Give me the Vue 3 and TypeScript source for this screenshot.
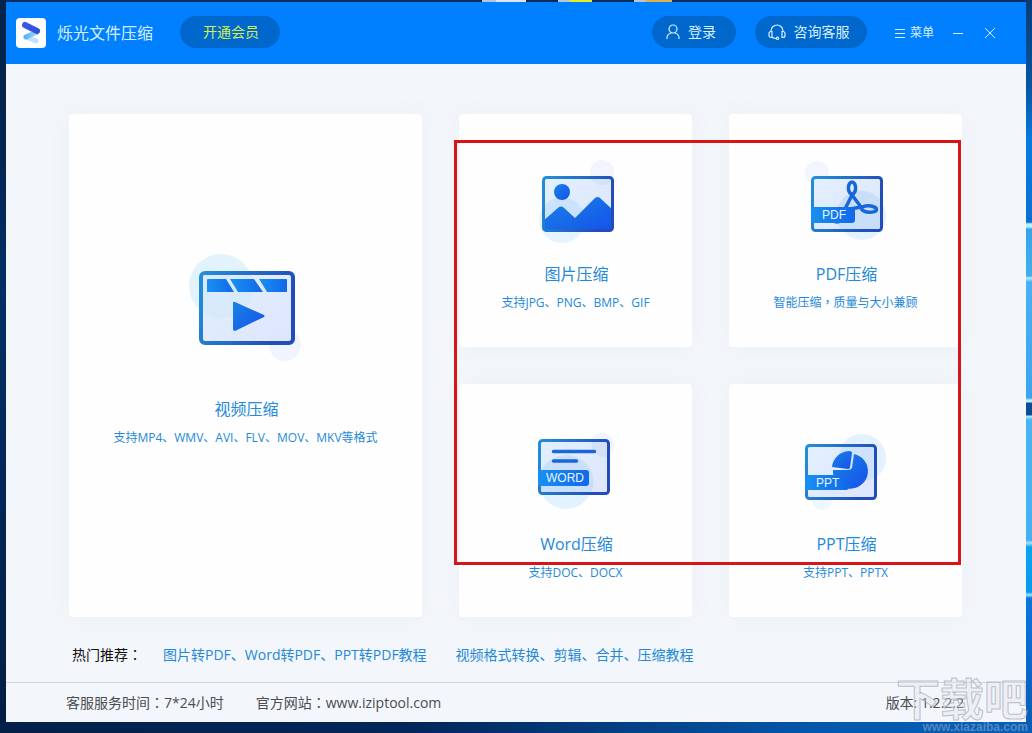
<script setup lang="ts">
interface Feature {
  id: 'image' | 'pdf' | 'word' | 'ppt'
  title: string
  parts: string[]
}

const features: Feature[] = [
  { id: 'image', title: '图片压缩', parts: ['支持JPG、PNG、BMP、GIF'] },
  { id: 'pdf', title: 'PDF压缩', parts: ['智能压缩', '质量与大小兼顾'] },
  { id: 'word', title: 'Word压缩', parts: ['支持DOC、DOCX'] },
  { id: 'ppt', title: 'PPT压缩', parts: ['支持PPT、PPTX'] },
]
</script>

<template>
  <div class="desktop">
    <div class="peek" aria-hidden="true"><i></i><i></i><i></i></div>
    <div class="window">
      <header class="titlebar">
        <svg class="logo" width="30" height="30" viewBox="0 0 30 30" aria-hidden="true">
          <defs>
            <linearGradient id="lg1" x1="0" y1="0" x2="1" y2="0"><stop offset="0" stop-color="#3a58ea" /><stop offset="1" stop-color="#2f50dc" /></linearGradient>
            <linearGradient id="lg2" x1="0" y1="0" x2="1" y2="0"><stop offset="0" stop-color="#58b4f6" /><stop offset="1" stop-color="#a8dcfb" /></linearGradient>
          </defs>
          <rect width="30" height="30" rx="4" fill="#fff" />
          <path d="M10 19L20 23" stroke="#bfe3fb" stroke-width="5" stroke-linecap="round" />
          <path d="M10 19L21 14" stroke="url(#lg2)" stroke-width="5" stroke-linecap="round" />
          <path d="M9 7L21 13" stroke="url(#lg1)" stroke-width="6" stroke-linecap="round" />
        </svg>
        <h1 class="name">烁光文件压缩</h1>
        <button class="pill vip" type="button">开通会员</button>
        <div class="actions">
          <button class="pill login" type="button">
            <svg width="16" height="16" viewBox="0 0 16 16" fill="none" stroke="currentColor" stroke-width="1.2" aria-hidden="true">
              <circle cx="8" cy="5" r="4" /><path d="M2 15v-1c0-2.500 2-4.500 4.300-5M14 15v-1c0-2.500-2-4.500-4.300-5" />
            </svg>
            登录
          </button>
          <button class="pill service" type="button">
            <svg width="18" height="16" viewBox="0 0 18 16" fill="none" stroke="currentColor" stroke-width="1.200" aria-hidden="true">
              <path d="M3 8V7a6 6 0 0 1 12 0v1" /><path d="M4 7.500v6H3A2 2 0 0 1 1 11.500v-2A2 2 0 0 1 3 7.500zM14 7.500v6h1a2 2 0 0 0 2-2v-2a2 2 0 0 0-2-2zM4 13c1 1 2 1.500 4 1.500" />
              <circle cx="9.500" cy="14.300" r="1.200" />
            </svg>
            咨询客服
          </button>
          <button class="plain menu" type="button">
            <svg width="10" height="10" viewBox="0 0 10 10" stroke="currentColor" aria-hidden="true"><path d="M0 1.500h10M0 5.500h10M0 9.500h10" /></svg>
            菜单
          </button>
          <button class="plain min" type="button" aria-label="最小化">
            <svg width="10" height="10" viewBox="0 0 10 10" stroke="currentColor" aria-hidden="true"><path d="M0 5.500h10" /></svg>
          </button>
          <button class="plain" type="button" aria-label="关闭">
            <svg width="10" height="10" viewBox="0 0 10 10" stroke="currentColor" aria-hidden="true"><path d="M0 0L10 10M10 0L0 10" /></svg>
          </button>
        </div>
      </header>

      <svg class="defs" width="0" height="0" aria-hidden="true">
        <defs>
          <linearGradient id="frame" x1="0" y1="0" x2="1" y2="0.300"><stop offset="0" stop-color="#248fd8" /><stop offset="1" stop-color="#204db8" /></linearGradient>
          <linearGradient id="solid" x1="0" y1="0" x2="1" y2="1"><stop offset="0" stop-color="#1885e2" /><stop offset="1" stop-color="#1650ee" /></linearGradient>
          <linearGradient id="tag" x1="0" y1="0" x2="1" y2="0"><stop offset="0" stop-color="#1890f0" /><stop offset="1" stop-color="#1268ea" /></linearGradient>
          <linearGradient id="pane" x1="0" y1="0" x2="1" y2="1"><stop offset="0" stop-color="#e2f0fe" /><stop offset="1" stop-color="#dee5fc" /></linearGradient>
        </defs>
      </svg>

      <main class="content">
        <div class="board">
          <button class="card video" type="button">
            <svg width="151" height="130" viewBox="0 0 151 130" aria-hidden="true">
              <circle cx="115" cy="105" r="16" fill="#f0f4fe" />
              <circle cx="51" cy="46" r="32" fill="#e2f3fd" />
              <rect x="31" y="33" width="92" height="70" rx="4" fill="url(#pane)" stroke="url(#frame)" stroke-width="4" />
              <path d="M33 72A32 32 0 0 0 82 35H33z" fill="#d3e7fc" opacity="0.600" />
              <path d="M37 40q0-1 1-1h18l8 13H37z" fill="url(#tag)" />
              <path d="M60 39h24l9 13H68z" fill="url(#tag)" />
              <path d="M89 39h27q1 0 1 1v12H97z" fill="url(#tag)" />
              <path d="M63 63q0-2 2-1L94 75q1 1 0 2L65 91q-2 0-2-2z" fill="url(#solid)" />
            </svg>
            <span class="title">视频压缩</span>
            <span class="sub">支持MP4、WMV、AVI、FLV、MOV、MKV等格式</span>
          </button>

          <div class="group">
            <button v-for="f in features" :key="f.id" class="card" type="button">
              <svg v-if="f.id === 'image'" width="121" height="100" viewBox="0 0 121 100" aria-hidden="true">
                <circle cx="87" cy="22" r="12" fill="#f2f4fe" />
                <circle cx="47" cy="70" r="23" fill="#e4f3fe" />
                <rect x="28.500" y="27.500" width="69" height="53" rx="3" fill="url(#pane)" />
                <path d="M29 56a23 23 0 0 1 41 14v10H29z" fill="#cbe2fc" />
                <path d="M76 28a12 12 0 0 0 22 0z" fill="#d6e1fb" />
                <circle cx="47" cy="42" r="8" fill="url(#solid)" />
                <path d="M28 71L44 57q2-1 4 0L60 68 80 48q3-2 5 0L98 60v18q0 3-3 3H31q-3 0-3-3z" fill="url(#solid)" />
                <rect x="28.500" y="27.500" width="69" height="53" rx="3" fill="none" stroke="url(#frame)" stroke-width="3" />
              </svg>
              <svg v-else-if="f.id === 'pdf'" width="121" height="100" viewBox="0 0 121 100" aria-hidden="true">
                <circle cx="32" cy="23" r="12" fill="#f2f5fd" />
                <circle cx="77" cy="66" r="24" fill="#e4f2fe" />
                <rect x="27.500" y="27.500" width="69" height="53" rx="3" fill="url(#pane)" />
                <path d="M56 79a24 24 0 0 1 40-28v29H56z" fill="#c9def9" />
                <g fill="none" stroke="#1767d6" stroke-width="3.500" stroke-linecap="round">
                  <ellipse cx="67" cy="38" rx="3.600" ry="6" />
                  <ellipse cx="84" cy="59" rx="7.500" ry="3.200" transform="rotate(4 84 59)" />
                  <path d="M67 45L60 59M67 45l9 12M60 60l16-3M48 70q4 4 9 0" />
                </g>
                <rect x="27.500" y="27.500" width="69" height="53" rx="3" fill="none" stroke="url(#frame)" stroke-width="3" />
                <path d="M26 57h44v13q0 3-3 3H26z" fill="url(#tag)" />
                <text x="37" y="69" class="tag">PDF</text>
              </svg>
              <svg v-else-if="f.id === 'word'" width="121" height="100" viewBox="0 0 121 100" aria-hidden="true">
                <circle cx="87" cy="25" r="12" fill="#f0f4fe" />
                <circle cx="51" cy="62" r="27" fill="#e2f2fe" />
                <rect x="24.500" y="20.500" width="69" height="53" rx="3" fill="url(#pane)" />
                <path d="M26 51a27 27 0 0 1 50 23H26z" fill="#c9dffb" />
                <path d="M77 22a12 12 0 0 0 16 14V22z" fill="#d5e0fb" />
                <path d="M38.500 31.500h41M38.500 41h23" fill="none" stroke="#1868dc" stroke-width="3.500" stroke-linecap="round" />
                <rect x="24.500" y="20.500" width="69" height="53" rx="3" fill="none" stroke="url(#frame)" stroke-width="3" />
                <path d="M23 50h48q3 0 3 3v10q0 3-3 3H23z" fill="url(#tag)" />
                <text x="31" y="62" class="tag">WORD</text>
              </svg>
              <svg v-else width="121" height="100" viewBox="0 0 121 100" aria-hidden="true">
                <circle cx="37" cy="80" r="10" fill="#f0f6fe" />
                <circle cx="77" cy="38" r="24" fill="#e3f2fe" />
                <rect x="21.500" y="25.500" width="69" height="53" rx="3" fill="url(#pane)" />
                <path d="M57 26a24 24 0 0 0 33 32V26z" fill="#cfe2fb" />
                <path d="M47 47a18 18 0 0 1 17-16q3 0 3 2l-2 14q0 2-2 2z" fill="url(#solid)" />
                <path d="M69 34a17.500 17.500 0 1 1-21 19v-3h15q3 0 4-2z" fill="url(#solid)" />
                <rect x="21.500" y="25.500" width="69" height="53" rx="3" fill="none" stroke="url(#frame)" stroke-width="3" />
                <path d="M20 55h44v12q0 3-3 3H20z" fill="url(#tag)" />
                <text x="31" y="67" class="tag">PPT</text>
              </svg>
              <span class="title">{{ f.title }}</span>
              <span class="sub">{{ f.parts[0] }}<template v-if="f.parts[1]"><span class="mid">，</span>{{ f.parts[1] }}</template></span>
            </button>
            <div class="highlight" aria-hidden="true"></div>
          </div>
        </div>

        <nav class="links" aria-label="热门推荐">
          <span class="label">热门推荐<span class="mid">：</span></span>
          <a href="#convert">图片转PDF、Word转PDF、PPT转PDF教程</a>
          <a href="#video">视频格式转换、剪辑、合并、压缩教程</a>
        </nav>
      </main>

      <footer class="footer">
        <span>客服服务时间<span class="mid">：</span>7*24小时</span>
        <span>官方网站<span class="mid">：</span>www.iziptool.com</span>
        <span class="version">版本: 1.2.2.2</span>
      </footer>
    </div>

    <div class="watermark">
      <span class="mark">下载吧</span>
      <span class="site">www.xiazaiba.com</span>
    </div>
  </div>
</template>

<style>
body {
  margin: 0;
}
</style>

<style scoped>
.desktop {
  position: relative;
  box-sizing: border-box;
  min-height: 100vh;
  padding: 2px 6px 11px;
  display: flex;
  overflow: hidden;
  font-family: "Open Sans", "Noto Sans CJK SC", sans-serif;
  font-size: 14px;
  line-height: 20px;
  background:
    linear-gradient(#063c78 0, #0757a5 90px, #087be0 140px, #0870d0 222px, #b8f0ff 224px, #b8f0ff 227px, #35a5e8 229px, #42aeee 276px, #b5eeff 278px, #48b0f4 282px, #3aa4ef 398px, #b8f0ff 400px, #b8f0ff 402px, #0b4c97 403px, #0b4c97 415px, #b8f0ff 416px, #48b4f4 420px, #45b0f4 540px, #a0e6ff 543px, #06a5ee 547px, #069aed 592px, #a0e6ff 595px, #0a76df 598px, #075cb6 733px) right top / 6px 100% no-repeat,
    linear-gradient(90deg, #02204a, #02265a 40%, #0458ac 80%, #0660b8) left bottom / 100% 11px no-repeat,
    linear-gradient(#04244a, #032552 20%, #032f66 40%, #021d44) left top / 6px 100% no-repeat,
    #052c5c;
}
.peek {
  position: absolute;
  top: 0;
  left: 482px;
  display: flex;
  gap: 32px;
}
.peek i {
  width: 44px;
  height: 2px;
  background: linear-gradient(90deg, #b9c6d6 14px, #e6e2f0 14px);
}
.peek i:nth-child(2) {
  background: linear-gradient(90deg, #b9c6d6 12px, #e5ee20 12px 34px, transparent 34px);
}
.peek i:nth-child(3) {
  background: linear-gradient(90deg, #b9c6d6 12px, #e0b04c 12px 38px, transparent 38px);
}
.window {
  position: relative;
  flex: 1;
  display: flex;
  flex-direction: column;
  background: #f3f6fa;
}
button {
  border: 0;
  margin: 0;
  padding: 0;
  font: inherit;
  color: inherit;
  cursor: pointer;
}
.titlebar {
  display: flex;
  align-items: center;
  height: 62px;
  padding: 0 31px 0 10px;
  background: #0080ff;
  color: #d9f0ff;
}
.name {
  margin: 0 27px 0 11px;
  font-size: 16px;
  line-height: 24px;
  font-weight: 400;
}
.pill {
  display: flex;
  align-items: center;
  justify-content: center;
  gap: 7px;
  height: 32px;
  margin-bottom: 2px;
  border-radius: 16px;
  background: #0067cd;
}
.vip {
  width: 100px;
  padding-left: 2px;
  color: #d2f052;
}
.actions {
  display: flex;
  align-items: center;
  margin-left: auto;
}
.login {
  width: 84px;
  padding-right: 7px;
  margin-right: 19px;
}
.service {
  width: 112px;
  padding-right: 4px;
  margin-right: 28px;
}
.plain {
  display: flex;
  align-items: center;
  gap: 5px;
  background: none;
  font-size: 12px;
}
.menu {
  margin-right: 19px;
}
.min {
  margin-right: 22px;
}
.defs {
  position: absolute;
}
.content {
  flex: 1;
  padding: 50px 64px 0 63px;
}
.board {
  display: grid;
  grid-template-columns: 353fr 503fr;
  gap: 37px;
}
.group {
  position: relative;
  display: grid;
  grid-template-columns: 1fr 1fr;
  gap: 37px;
}
.card {
  display: flex;
  flex-direction: column;
  align-items: center;
  justify-content: flex-start;
  min-height: 233px;
  padding: 36px 0 0;
  border-radius: 4px;
  background: #fefeff;
  box-shadow: 0 0 20px #eaf1f5;
  color: #2489d8;
}
.card svg {
  flex: none;
}
.video {
  padding-top: 126px;
}
.title {
  margin-top: 12px;
  padding-left: 2px;
  font-size: 16px;
  line-height: 24px;
}
.video .title {
  margin-top: 27px;
}
.sub {
  margin-top: 7px;
  font-size: 12px;
  line-height: 20px;
  white-space: nowrap;
}
.mid {
  font-family: "Noto Sans CJK TC", sans-serif;
  line-height: 1;
}
.tag {
  font-family: "Liberation Sans", Arial, sans-serif;
  font-size: 12px;
  fill: #eaf6ff;
}
.highlight {
  position: absolute;
  inset: 26px 1px 52px -5px;
  border: 3px solid #d91418;
  pointer-events: none;
}
.links {
  display: flex;
  margin: 28px 0 0 3px;
}
.links .label {
  color: #111;
  margin-right: 21px;
}
.links a {
  margin-right: 29px;
  color: #2489d8;
  text-decoration: none;
}
.footer {
  display: flex;
  align-items: center;
  gap: 32px;
  height: 39px;
  padding: 0 62px 0 60px;
  border-top: 1px solid #d2d6dc;
  color: #4a4d52;
}
.version {
  margin-left: auto;
}
.watermark {
  position: absolute;
  right: 4px;
  bottom: 0;
  display: flex;
  flex-direction: column;
  align-items: flex-end;
  pointer-events: none;
}
.mark {
  font: 700 44px/48px "Noto Sans CJK SC", sans-serif;
  color: rgba(225, 228, 235, 0.4);
  -webkit-text-stroke: 1px rgba(150, 155, 170, 0.6);
}
.site {
  font: 700 12px/12px "Liberation Sans", Arial, sans-serif;
  color: rgba(140, 165, 200, 0.6);
}
</style>
